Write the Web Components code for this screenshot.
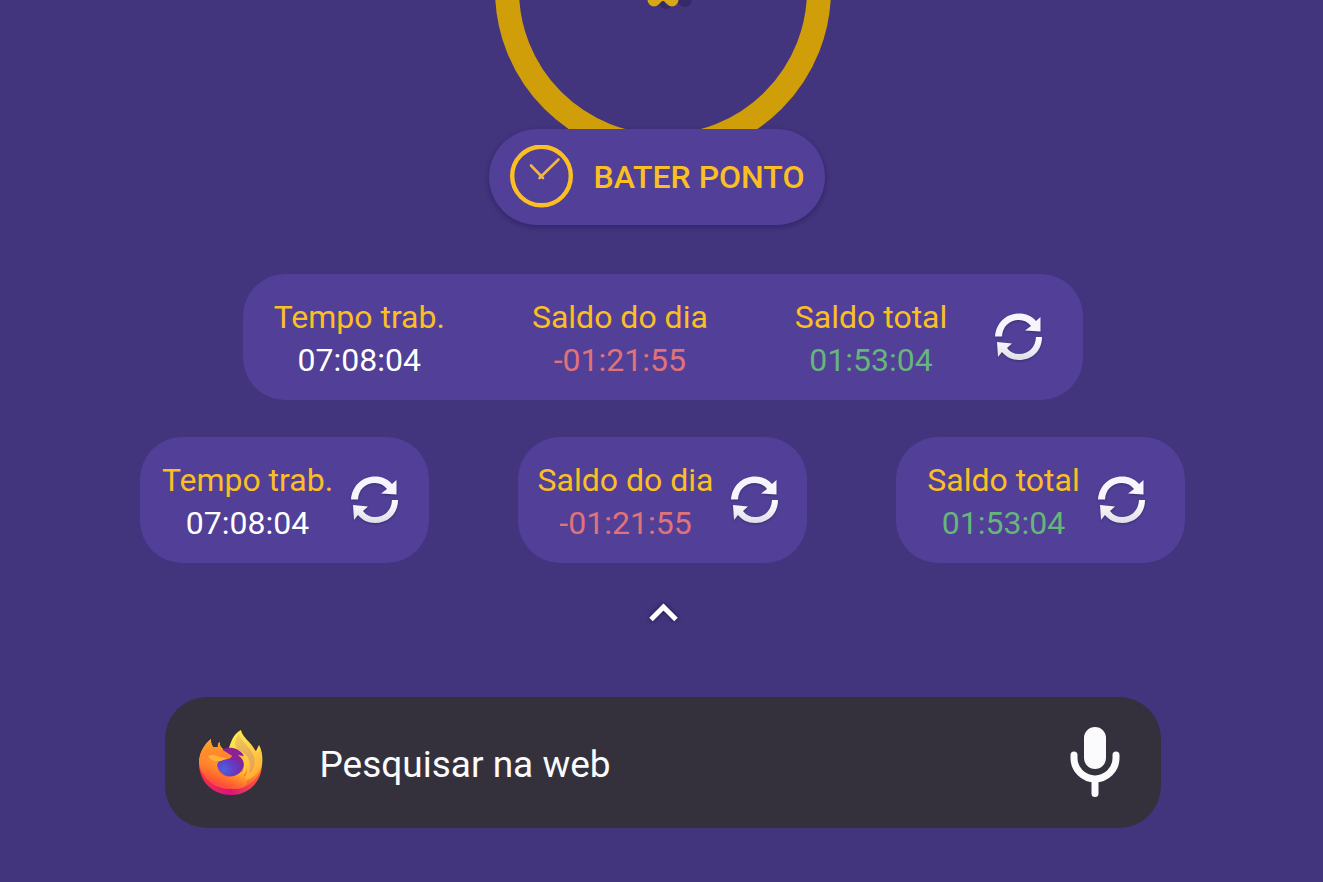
<!DOCTYPE html>
<html lang="pt-BR">
<head>
<meta charset="utf-8">
<meta name="viewport" content="width=device-width, initial-scale=1">
<title>Ponto</title>
<style>
html { background: #42347d; }
body { margin: 0; font-family: Roboto, "Liberation Sans", sans-serif; color: #fff; }
</style>
</head>
<body>
<home-screen></home-screen>
<script>
const define = (name, html) => customElements.define(name, class extends HTMLElement {
  constructor() {
    super();
    const t = document.createElement('template');
    t.innerHTML = html;
    this.attachShadow({ mode: 'open' }).append(t.content.cloneNode(true));
  }
});

define('clock-face', `
<style>
:host { display: block; height: 129px; overflow: hidden; }
svg { display: block; margin: 0 auto; }
</style>
<svg width="340" height="129" viewBox="-170 10 340 129" aria-hidden="true">
  <circle r="156" fill="none" stroke="#cf9e09" stroke-width="24"/>
  <g fill="#372a68"><circle cx="3" cy="12" r="7"/><circle cx="22" cy="10" r="7"/></g>
  <g stroke="#d6a716" stroke-width="13" stroke-linecap="round"><path d="M-9 10l12-12M9 10l-12-12"/></g>
</svg>`);

define('punch-button', `
<style>
:host { display: block; }
button { display: flex; align-items: center; gap: 21px; height: 96px; padding: 0 21px; border: 0; border-radius: 48px;
  background: #513f98; color: #fbbf24; font: 500 32px/40px Roboto, "Liberation Sans", sans-serif; white-space: nowrap;
  box-shadow: 0 2px 5px rgba(20,10,60,.35); cursor: pointer; }
svg { display: block; flex: none; }
</style>
<button type="button">
  <svg width="63" height="64" viewBox="0 0 63 64" fill="none" stroke="#fbbf24" aria-hidden="true">
    <circle cx="31.500" cy="31" r="29.300" stroke-width="4.400"/>
    <path d="M21 20.500L33 33M48.500 14.500L29.500 33" stroke="#efb64a" stroke-width="2.600" stroke-linecap="round"/>
  </svg>
  <slot></slot>
</button>`);

define('refresh-button', `
<style>
:host { display: block; flex: none; }
button { display: block; padding: 8px; border: 0; background: none; cursor: pointer; }
svg { display: block; filter: drop-shadow(0 1px 1px rgba(40,30,70,.5)); }
</style>
<button type="button" aria-label="Atualizar">
  <svg width="48" height="48" viewBox="0 0 48 48" aria-hidden="true">
    <defs><linearGradient id="g" x1="0" y1="0" x2="0" y2="1"><stop offset="0" stop-color="#fff"/><stop offset="1" stop-color="#dfdde8"/></linearGradient></defs>
    <path fill="#f6f4fc" d="M0 23.500C1 10 11 .5 24 .5C31 .5 37 3 41 8L45.500 4V18.500L30 17.500L36 13C33 9 29 7 24 7C14 7 7.500 14 7 23.500Z"/>
    <path fill="url(#g)" d="M47 24C47 38 37 47 24 47C17 47 11 44 7 39L3 44L2 29L17 30.500L12 35C15 39 19 41 24 41C34 41 40.500 34 41 24Z"/>
  </svg>
</button>`);

define('time-stat', `
<style>
:host { display: block; padding-top: 4px; text-align: center; font-size: 32px; line-height: 43px; white-space: nowrap; }
.label { color: #fbbf24; }
.value { color: #fff; }
:host([tone="negative"]) .value { color: #e07378; }
:host([tone="positive"]) .value { color: #66b57a; }
</style>
<div class="label"><slot name="label"></slot></div>
<div class="value"><slot></slot></div>`);

define('stat-card', `
<style>
:host { display: flex; align-items: center; justify-content: center; gap: 10px; box-sizing: border-box;
  height: 126px; border-radius: 42px; background: #513f98; min-width: 0; }
:host([wide]) { width: 100%; max-width: 840px; margin: 0 auto; gap: 40px; }
.stats { display: flex; gap: 87px; }
</style>
<div class="stats"><slot></slot></div>
<refresh-button></refresh-button>`);

define('firefox-logo', `
<style>:host { display: block; flex: none; } svg { display: block; }</style>
<svg width="66" height="68" viewBox="0 0 66 68" role="img" aria-label="Firefox">
  <defs>
    <linearGradient id="body" x1=".9" y1=".15" x2=".4" y2="1"><stop offset="0" stop-color="#ffe04a"/><stop offset=".35" stop-color="#ffb030"/><stop offset=".6" stop-color="#ff7a2c"/><stop offset=".85" stop-color="#ff5038"/><stop offset="1" stop-color="#ff4544"/></linearGradient>
    <linearGradient id="rim" x1="0" y1="0" x2="1" y2="0"><stop offset="0" stop-color="#f5304a"/><stop offset=".5" stop-color="#d9147a"/><stop offset="1" stop-color="#ff5a38"/></linearGradient>
    <linearGradient id="head" x1=".3" y1="0" x2=".4" y2="1"><stop offset="0" stop-color="#ffa62c"/><stop offset=".4" stop-color="#ff8a2b"/><stop offset="1" stop-color="#ff6330" stop-opacity="0"/></linearGradient>
    <linearGradient id="flame" x1=".2" y1="0" x2=".7" y2="1"><stop offset="0" stop-color="#ffec50"/><stop offset=".5" stop-color="#ffd047"/><stop offset="1" stop-color="#ffab35"/></linearGradient>
    <linearGradient id="inner" x1=".4" y1="0" x2=".5" y2="1"><stop offset="0" stop-color="#f0cf55"/><stop offset=".5" stop-color="#e6ae5c"/><stop offset="1" stop-color="#eba348"/></linearGradient>
    <radialGradient id="globe" cx=".25" cy=".75" r=".85"><stop offset="0" stop-color="#4f60de"/><stop offset=".45" stop-color="#633cc4"/><stop offset="1" stop-color="#832095"/></radialGradient>
  </defs>
  <path fill="url(#rim)" d="M1 32V36C2 54 16 66 33 66C50 66 64 53 64 35L60 30Z"/>
  <path fill="url(#body)" d="M1 33C1 24 6 16 13 10C12.500 13 13.500 16 15 18L20 18C19.500 16 20.500 14 21.500 13C21.500 16 23 18 25 20L58 22L61 16C64 22 65 28 64 36C61 51 49 60 34 60C16 60 3 49 1 33Z"/>
  <path fill="url(#flame)" d="M31 19C34 9 37 4 43 1C44 8 53 13 57 21C60 25 62 21 61 16C65 24 64 35 59 43C55 50 49 52 44 52C50 46 51 36 46 29C42 24 36 22 31 19Z"/>
  <path fill="url(#inner)" d="M38 18C36 13 38 9 41 5C43 12 53 19 56 28C58 35 56 41 51 45C53 37 52 29 47 25C43 22 40 21 38 18Z"/>
  <circle cx="32.500" cy="34" r="13.500" fill="url(#globe)"/>
  <path fill="#8b2292" d="M22 22C26 19 31 18 35 19C40 20 44 23 46 27L41 26L45 32L36 31L24 29Z"/>
  <path fill="#ffc63f" d="M40 26C45 26 50 31 49 38C48 44 45 47 41 49C44 45 46 41 46 37C46 32 44 29 40 26Z"/>
  <path fill="#ff8b2c" d="M2 27C4 20 8 14 13 10C12.500 13 13.500 16 15 18L20 18C19.500 16 20.500 14 21.500 13C21.500 18 23 21 26 22L34 27C32 31 26 30 22 32C18 34 18 38 20 43L6 42Z"/>
  <path fill="url(#body)" d="M1 33C1 30 2 28 3 26L20 33C18 36 19 42 23 45C29 50 38 48 43 43C48 48 52 54 46 58C42 60 38 60 34 60C16 60 3 49 1 33Z"/>
  <path fill="url(#head)" d="M2 27C4 20 8 14 13 10C12.500 13 13.500 16 15 18L20 18C19.500 16 20.500 14 21.500 13C21.500 18 23 21 26 22L34 27C32 31 26 30 22 32C18 34 18 38 20 43L17 47L2 42C1 36 1 31 2 27Z"/>
  <path fill="#ffb23a" d="M10 27C14 25 18 26 22 28L29 29C25 31 22 33 17 32C14 31 11 30 10 27Z"/>
</svg>`);

define('search-bar', `
<style>
:host { display: block; width: 100%; max-width: 996px; margin: 0 auto; }
form { display: flex; align-items: center; height: 131px; box-sizing: border-box; padding: 0 33px; border-radius: 42px; background: #34313c; }
input { flex: 1; min-width: 0; height: 64px; margin: 4px 24px 0 56px; padding: 0; border: 0; outline: 0; background: none;
  color: #fbfbfe; font: 400 37px/64px Roboto, "Liberation Sans", sans-serif; }
input::placeholder { color: #fbfbfe; opacity: 1; }
button { flex: none; padding: 0 8px 0 0; border: 0; background: none; cursor: pointer; }
button svg { display: block; }
</style>
<form role="search">
  <firefox-logo></firefox-logo>
  <input type="text" aria-label="Pesquisar na web" placeholder="Pesquisar na web">
  <button type="button" aria-label="Pesquisa por voz">
    <svg width="50" height="72" viewBox="0 0 50 72" aria-hidden="true">
      <rect x="14" width="22" height="42" rx="11" fill="#fbfbfe"/>
      <path d="M4 28V31a21 21 0 0 0 42 0V28M25 52V66.500" fill="none" stroke="#fbfbfe" stroke-width="7" stroke-linecap="round"/>
    </svg>
  </button>
</form>`);

define('drawer-handle', `
<style>
:host { display: block; }
button { display: block; margin: 0 auto; padding: 0; border: 0; background: none; cursor: pointer; }
svg { display: block; filter: drop-shadow(0 0 2px rgba(20,10,50,.7)); }
</style>
<button type="button" aria-label="Abrir aplicativos">
  <svg width="36" height="28" viewBox="0 0 36 28" aria-hidden="true"><path d="M6 20.500L18.500 8L31 20.500" fill="none" stroke="#fff" stroke-width="5"/></svg>
</button>`);

define('home-screen', `
<style>
:host { display: block; padding: 0 0 54px 2px; }
punch-button { width: fit-content; margin: 0 auto; padding-right: 11px; }
stat-card[wide] { margin-top: 49px; }
.row { display: grid; grid-template-columns: repeat(3, minmax(0, 1fr)); gap: 89px; max-width: 1045px; margin: 37px auto 0; }
drawer-handle { margin-top: 36px; }
search-bar { margin-top: 70px; }
</style>
<clock-face></clock-face>
<punch-button>BATER PONTO</punch-button>
<stat-card wide>
  <time-stat><span slot="label">Tempo trab.</span>07:08:04</time-stat>
  <time-stat tone="negative"><span slot="label">Saldo do dia</span>-01:21:55</time-stat>
  <time-stat tone="positive"><span slot="label">Saldo total</span>01:53:04</time-stat>
</stat-card>
<div class="row">
  <stat-card><time-stat><span slot="label">Tempo trab.</span>07:08:04</time-stat></stat-card>
  <stat-card><time-stat tone="negative"><span slot="label">Saldo do dia</span>-01:21:55</time-stat></stat-card>
  <stat-card><time-stat tone="positive"><span slot="label">Saldo total</span>01:53:04</time-stat></stat-card>
</div>
<drawer-handle></drawer-handle>
<search-bar></search-bar>`);
</script>
</body>
</html>
